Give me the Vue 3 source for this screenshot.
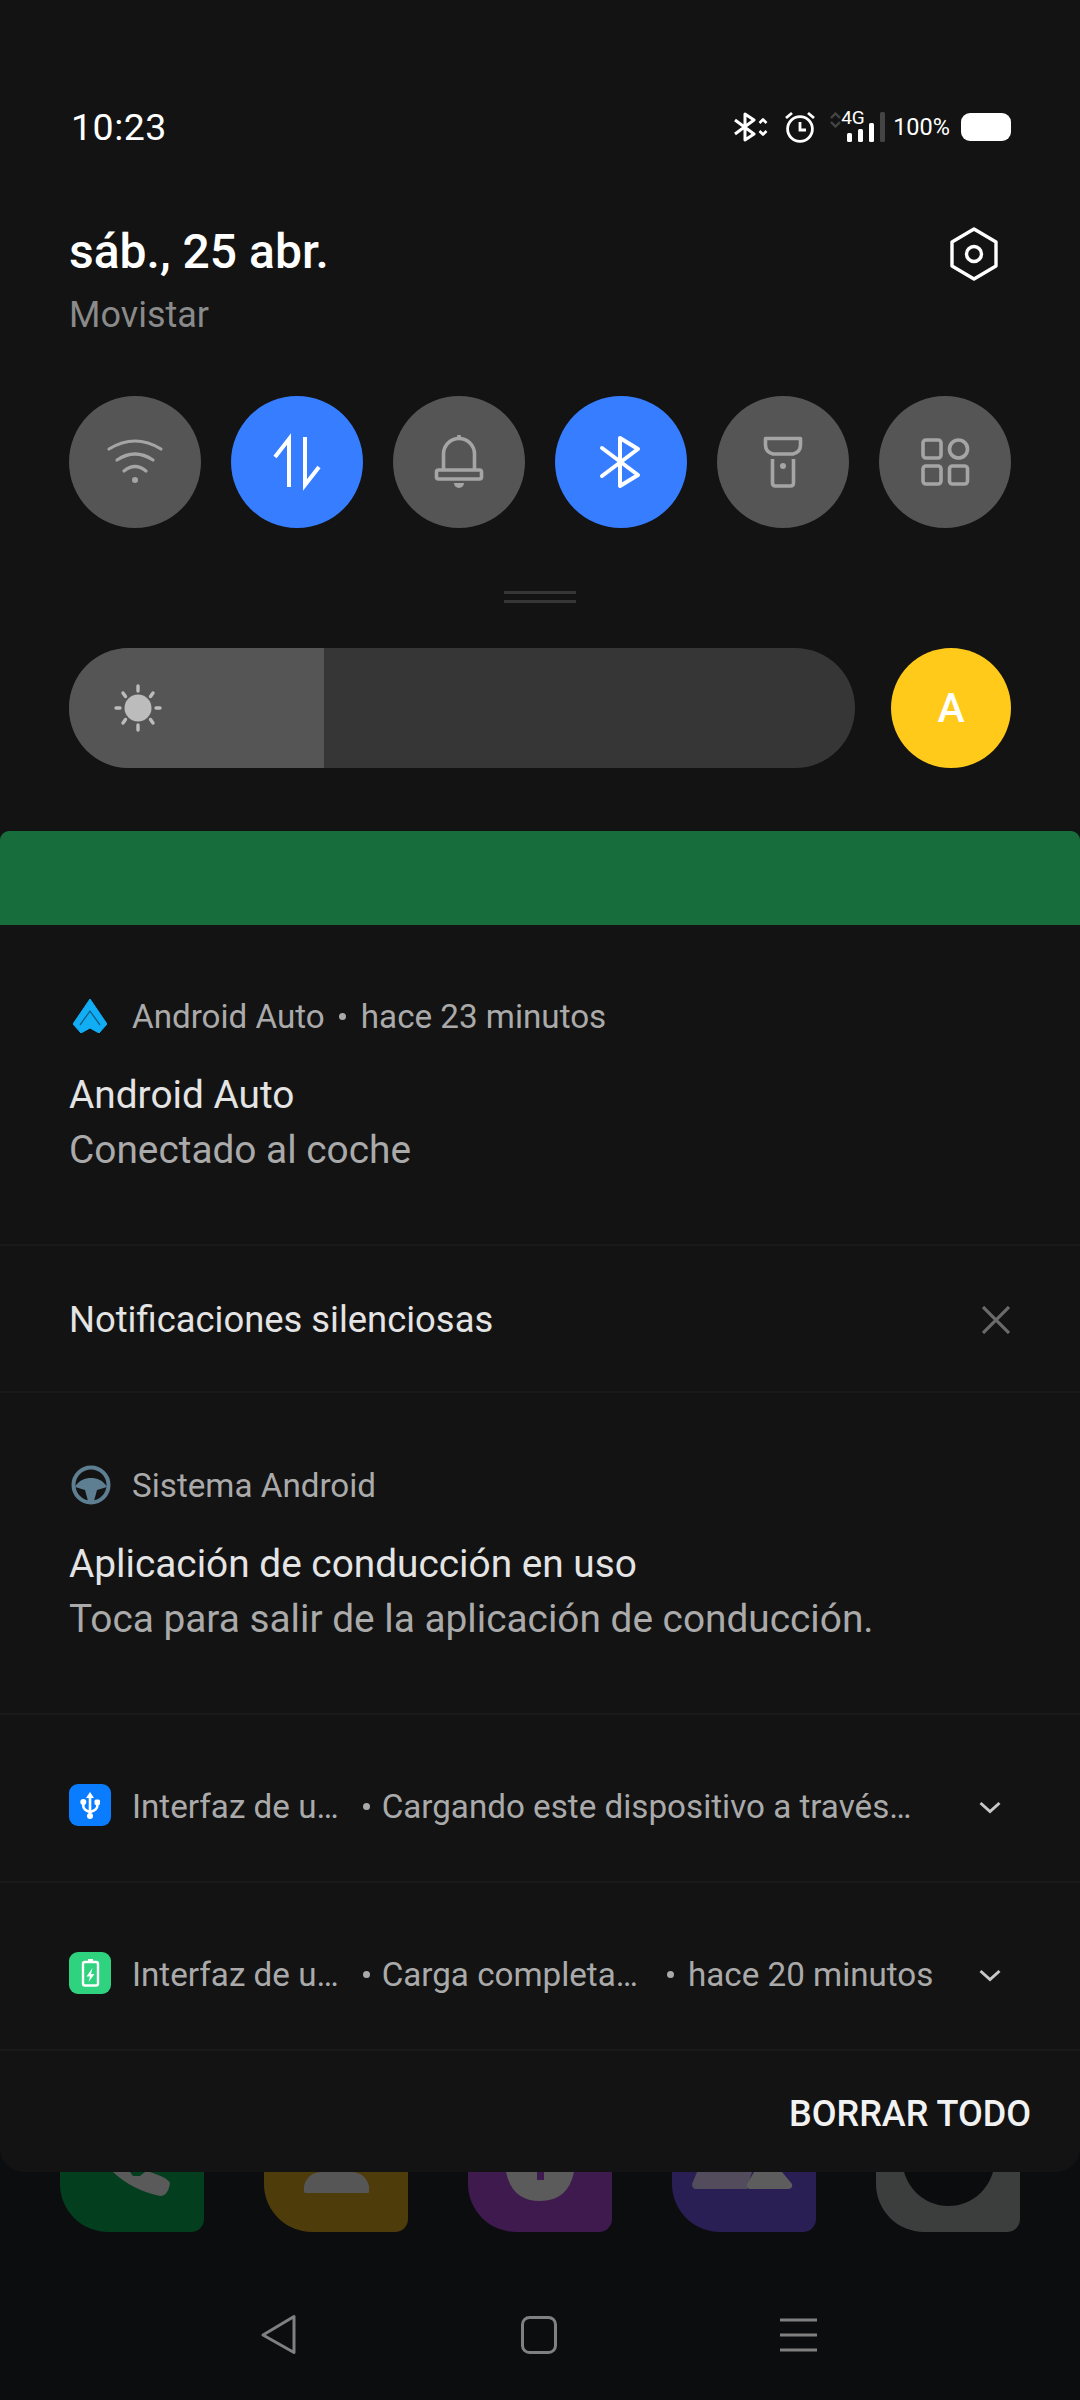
<script setup>
const silentRows = [
  { parts: ['Interfaz de u…', 'Cargando este dispositivo a través…'], kind: 'usb' },
  { parts: ['Interfaz de u…', 'Carga completa…', 'hace 20 minutos'], kind: 'bat' }
]
const docks = ['phone', 'contact', 'clock', 'store', 'cam']
</script>

<template>
  <div class="screen">
    <div class="panel">
      <div class="status">
        <span class="time">10:23</span>
        <div class="status-icons">
          <svg class="si-bt" width="34" height="30" viewBox="0 0 34 30" fill="none" stroke="#fff" stroke-width="3" stroke-linejoin="round">
            <path d="M1 8 L20 22 L11 28 V2 L20 8 L1 22" />
            <path d="M25.500 11 L29 7.500 L32.500 11 M25.500 19 L29 22.500 L32.500 19" stroke-width="2.600" />
          </svg>
          <svg class="si-alarm" width="30" height="32" viewBox="0 0 30 32" fill="none" stroke="#fff" stroke-width="2.800">
            <circle cx="15" cy="18" r="12.400" />
            <path d="M15 11 V19 H21" />
            <path d="M1 7 L7 2 M29 7 L23 2" />
          </svg>
          <div class="si-net">
            <svg class="si-updown" width="11" height="16" viewBox="0 0 11 16" fill="none" stroke="#444" stroke-width="2.400">
              <path d="M1 6 L5.500 1.500 L10 6 M1 10 L5.500 14.500 L10 10" />
            </svg>
            <span class="four-g">4G</span>
            <svg class="si-bars" width="40" height="31" viewBox="0 0 40 31">
              <rect x="1" y="21" width="5" height="9" rx="1.500" fill="#fff" />
              <rect x="12" y="17" width="5" height="13" rx="1.500" fill="#fff" />
              <rect x="23" y="11" width="5" height="19" rx="1.500" fill="#fff" />
              <rect x="34" y="0" width="5" height="30" rx="1.500" fill="#444" />
            </svg>
          </div>
          <span class="pct">100%</span>
          <div class="battery"></div>
        </div>
      </div>

      <div class="date-row">
        <div>
          <div class="date">sáb., 25 abr.</div>
          <div class="carrier">Movistar</div>
        </div>
        <svg width="50" height="54" viewBox="0 0 50 54" fill="none" stroke="#fff" stroke-width="3.400" stroke-linejoin="round">
          <path d="M25 2 L47 15 V39 L25 52 L3 39 V15 Z" />
          <circle cx="25" cy="27" r="7.500" />
        </svg>
      </div>

      <div class="toggles">
        <div class="toggle">
          <svg viewBox="0 0 132 132" fill="none" stroke="#a5a5a5" stroke-width="3.200" stroke-linecap="round">
            <path d="M40 53 Q66 37 92 53" />
            <path d="M48 64 Q66 52 84 64" />
            <path d="M55 75 Q66 66 77 75" />
            <circle cx="66" cy="84" r="3" fill="#a5a5a5" stroke="none" />
          </svg>
        </div>
        <div class="toggle on">
          <svg viewBox="0 0 132 132" fill="none" stroke="#fff" stroke-width="4">
            <path d="M44 61 L58 43 V91" />
            <path d="M74 41 V89 L88 71" />
          </svg>
        </div>
        <div class="toggle">
          <svg viewBox="0 0 132 132" fill="none" stroke="#a5a5a5" stroke-width="3.600" stroke-linejoin="round">
            <path d="M50.500 74 V58 a15.500 15.500 0 0 1 31 0 V74" />
            <rect x="43.500" y="74" width="45" height="9" rx="2" />
            <path d="M66 39 V43" />
            <path d="M61 87 H71 A5 5 0 0 1 61 87 Z" fill="#a5a5a5" stroke="none" />
          </svg>
        </div>
        <div class="toggle on">
          <svg viewBox="0 0 132 132" fill="none" stroke="#fff" stroke-width="4" stroke-linejoin="round" stroke-linecap="round">
            <path d="M47 52 L83 79 L65 90 V42 L83 53 L47 80" />
          </svg>
        </div>
        <div class="toggle">
          <svg viewBox="0 0 132 132" fill="none" stroke="#a5a5a5" stroke-width="3.600" stroke-linejoin="round">
            <path d="M48.500 42.500 H83.500 V49 Q83.500 56 76 58 H56 Q48.500 56 48.500 49 Z" />
            <path d="M55.500 63 V87 q0 3 3 3 H73.500 q3 0 3 -3 V63" />
            <circle cx="66" cy="70" r="3" fill="#a5a5a5" stroke="none" />
          </svg>
        </div>
        <div class="toggle">
          <svg viewBox="0 0 132 132" fill="none" stroke="#a5a5a5" stroke-width="3.600">
            <rect x="44" y="44" width="18" height="18" rx="3" />
            <circle cx="79.500" cy="53" r="9" />
            <rect x="44" y="70" width="18" height="18" rx="3" />
            <rect x="70.500" y="70" width="18" height="18" rx="3" />
          </svg>
        </div>
      </div>

      <div class="handle"><i></i><i></i></div>

      <div class="brightness">
        <div class="slider">
          <div class="slider-fill">
            <svg width="48" height="48" viewBox="0 0 48 48" fill="#bcbcbc" stroke="#bcbcbc" stroke-width="3.400" stroke-linecap="round">
              <circle cx="24" cy="24" r="13.500" stroke="none" />
              <path d="M24 2 V7 M24 41 V46 M2 24 H6 M42 24 H46 M9 9 L11.500 12.500 M39 9 L36.500 12.500 M9 39 L11.500 35.500 M39 39 L36.500 35.500" />
            </svg>
          </div>
        </div>
        <div class="auto">A</div>
      </div>

      <div class="green"></div>

      <section class="notif first">
        <div class="app-line">
          <svg class="app-icon" width="34" height="34" viewBox="0 0 34 34">
            <path d="M17 0 L34 25 L26 34 L17 29 L8 34 L0 25 Z" fill="#12aef5" stroke="#12aef5" stroke-linejoin="round" />
            <path d="M7 26 L17 12 L27 26" fill="none" stroke="#0d5f86" stroke-width="1.300" />
          </svg>
          <span>Android Auto</span><b class="dot"></b><span>hace 23 minutos</span>
        </div>
        <div class="title">Android Auto</div>
        <div class="body">Conectado al coche</div>
      </section>

      <div class="silent-head">
        <span>Notificaciones silenciosas</span>
        <svg width="28" height="28" viewBox="0 0 28 28" stroke="#6a6a6a" stroke-width="3.200">
          <path d="M1 1 L27 27 M27 1 L1 27" />
        </svg>
      </div>

      <section class="notif second">
        <div class="app-line">
          <svg class="app-icon wheel" width="40" height="40" viewBox="0 0 40 40">
            <circle cx="20" cy="20" r="17.500" fill="none" stroke="#5d7f91" stroke-width="4" />
            <path d="M4 22 C8 15 14 13 20 13 C26 13 32 15 36 22 L26 25 L23 36 H17 L14 25 Z" fill="#5d7f91" />
          </svg>
          <span>Sistema Android</span>
        </div>
        <div class="title">Aplicación de conducción en uso</div>
        <div class="body">Toca para salir de la aplicación de conducción.</div>
      </section>

      <div v-for="row in silentRows" :key="row.kind" class="collapsed">
        <div class="mini" :class="row.kind">
          <svg v-if="row.kind === 'usb'" width="42" height="42" viewBox="0 0 42 42" fill="none" stroke="#fff" stroke-width="2.600">
            <path d="M21 12 V31" />
            <path d="M14.300 19 V22 Q14.300 26 21 28 Q28.300 26 28.300 22 V19" />
            <path d="M21 8 L25 14 H17 Z" fill="#fff" stroke="none" />
            <circle cx="21" cy="32" r="3" fill="#fff" stroke="none" />
            <circle cx="14.300" cy="18" r="3" fill="#fff" stroke="none" />
            <rect x="25.500" y="15.500" width="5.500" height="5.500" rx="1.500" fill="#fff" stroke="none" />
          </svg>
          <svg v-else width="42" height="42" viewBox="0 0 42 42" fill="none" stroke="#fff" stroke-width="2.400">
            <rect x="14" y="10" width="15" height="23.500" rx="2" />
            <path d="M19 7 H24 V10 H19 Z" fill="#fff" stroke="none" />
            <path d="M23.500 16 L17.500 24.500 H21 L19.500 30 L25.500 22 H22 Z" fill="#fff" stroke="none" />
          </svg>
        </div>
        <div class="mini-text">
          <template v-for="(part, i) in row.parts" :key="i">
            <b v-if="i" class="dot"></b>
            <span>{{ part }}</span>
          </template>
        </div>
        <svg class="chev" width="22" height="14" viewBox="0 0 22 14" fill="none" stroke="#c8c8c8" stroke-width="3">
          <path d="M1.500 2 L11 10.500 L20.500 2" />
        </svg>
      </div>

      <div class="clear-row"><span>BORRAR TODO</span></div>
    </div>

    <div class="dock">
      <div v-for="d in docks" :key="d" class="dock-icon" :class="d">
        <svg width="144" height="60" viewBox="0 0 144 60">
          <path v-if="d === 'phone'" d="M53 0 Q72 18 100 24 Q108 24 110 11 Q108 6 90 0 H85 L80 4 H73 L70 0 Z" fill="#5a5a5a" />
          <path v-if="d === 'contact'" d="M40 20 V14 Q44 0 58 0 H87 Q101 0 105 14 V20 Q105 21 103 21 H42 Q40 21 40 20 Z" fill="#565656" />
          <path v-if="d === 'clock'" d="M38 0 H106 Q100 29 72 29 Q44 29 38 0 Z" fill="#5b5b5b" />
          <rect v-if="d === 'clock'" x="69" y="0" width="7" height="8" fill="#3f1a4f" />
          <path v-if="d === 'store'" d="M25 0 H80 L75 17 H24 Q20 17 20 12 Z" fill="#524c5c" />
          <path v-if="d === 'store'" d="M82 0 H110 L120 12 Q121 17 116 17 H78 Q74 17 75 12 Z" fill="#5d5d5d" />
          <circle v-if="d === 'cam'" cx="72.500" cy="-12" r="46" fill="#0b0c0e" />
        </svg>
      </div>
    </div>

    <div class="nav">
      <svg width="38" height="42" viewBox="0 0 38 42" fill="none" stroke="#808080" stroke-width="3" stroke-linejoin="round">
        <path d="M34 2.500 V38.500 L3 21 Z" />
      </svg>
      <svg width="36" height="38" viewBox="0 0 36 38" fill="none" stroke="#808080" stroke-width="3">
        <rect x="1.500" y="1.500" width="33" height="35" rx="7" />
      </svg>
      <svg width="37" height="34" viewBox="0 0 37 34" stroke="#808080" stroke-width="3">
        <path d="M0 2 H37 M0 17 H37 M0 32 H37" />
      </svg>
    </div>
  </div>
</template>

<style scoped>
.screen {
  width: 1080px;
  height: 2400px;
  background: #0c0d0f;
  font-family: Roboto, "Liberation Sans", sans-serif;
  overflow: hidden;
  display: flex;
  flex-direction: column;
}
.panel {
  height: 2172px;
  flex: none;
  background: #131313;
  border-radius: 0 0 24px 24px;
  position: relative;
  z-index: 1;
}
.status {
  padding: 100px 69px 0 71px;
  height: 54px;
  display: flex;
  align-items: center;
  justify-content: space-between;
}
.time {
  font-size: 37.500px;
  color: #fff;
  letter-spacing: 0.500px;
}
.status-icons {
  display: flex;
  align-items: center;
  height: 54px;
}
.si-bt { margin-right: 17px; }
.si-alarm { margin-right: 15px; }
.si-net {
  position: relative;
  width: 56px;
  height: 31px;
  margin-right: 7px;
}
.si-updown { position: absolute; left: 0; top: 0; }
.si-bars { position: absolute; right: 0; top: 0; }
.four-g {
  position: absolute;
  left: 11px;
  top: -4px;
  font-size: 19px;
  line-height: 20px;
  color: #fff;
}
.pct {
  font-size: 23.500px;
  color: #fff;
  margin-right: 11px;
}
.battery {
  width: 50px;
  height: 28px;
  border-radius: 9px;
  background: #fff;
}
.date-row {
  margin-top: 73px;
  padding: 0 81px 0 69px;
  display: flex;
  justify-content: space-between;
  align-items: flex-start;
}
.date {
  font-size: 48px;
  font-weight: 500;
  color: #fff;
  line-height: 50px;
}
.carrier {
  margin-top: 16px;
  font-size: 36px;
  line-height: 44px;
  color: #8a8a8a;
}
.toggles {
  margin-top: 59px;
  padding: 0 69px;
  display: flex;
  justify-content: space-between;
}
.toggle {
  width: 132px;
  height: 132px;
  border-radius: 50%;
  background: #555;
}
.toggle svg { display: block; width: 132px; height: 132px; }
.toggle.on { background: #367eff; }
.handle {
  margin-top: 63px;
  display: flex;
  flex-direction: column;
  align-items: center;
  gap: 6px;
}
.handle i {
  display: block;
  width: 72px;
  height: 3px;
  background: #363636;
}
.brightness {
  margin-top: 45px;
  padding: 0 69px;
  display: flex;
  gap: 36px;
}
.slider {
  width: 786px;
  height: 120px;
  border-radius: 60px;
  background: #363636;
  overflow: hidden;
}
.slider-fill {
  width: 255px;
  height: 120px;
  background: #555;
  display: flex;
  align-items: center;
  padding-left: 45px;
  box-sizing: border-box;
}
.auto {
  width: 120px;
  height: 120px;
  border-radius: 50%;
  background: #ffca1a;
  color: #fff;
  font-size: 41px;
  font-weight: 500;
  display: flex;
  align-items: center;
  justify-content: center;
}
.green {
  margin-top: 63px;
  height: 94px;
  background: #176d3b;
  border-radius: 9px 9px 0 0;
}
.notif {
  border-bottom: 2px solid #1a1a1a;
  box-sizing: border-box;
  padding-left: 69px;
}
.notif.first { height: 321px; padding-top: 70px; }
.notif.second { height: 322px; padding-top: 71px; }
.app-line {
  display: flex;
  align-items: center;
  height: 42px;
  font-size: 33.200px;
  color: #aaa;
}
.app-icon {
  margin-left: 4px;
  margin-right: 25px;
}
.app-icon.wheel {
  margin-left: 2px;
  margin-right: 21px;
}
.dot {
  width: 7px;
  height: 7px;
  border-radius: 50%;
  background: #aaa;
  margin: 0 15px 0 14px;
  flex: none;
}
.title {
  margin-top: 33px;
  font-size: 38.800px;
  line-height: 50px;
  color: #e4e4e4;
}
.body {
  margin-top: 5px;
  font-size: 38.800px;
  line-height: 50px;
  color: #aaa;
}
.silent-head {
  height: 147px;
  box-sizing: border-box;
  padding: 2px 70px 0 69px;
  border-bottom: 2px solid #1a1a1a;
  display: flex;
  align-items: center;
  justify-content: space-between;
  font-size: 36.400px;
  color: #e4e4e4;
}
.collapsed {
  height: 168px;
  box-sizing: border-box;
  border-bottom: 2px solid #1a1a1a;
  padding: 14px 69px 0;
  display: flex;
  align-items: center;
  position: relative;
}
.mini {
  width: 42px;
  height: 42px;
  border-radius: 9px;
  flex: none;
  margin-right: 21px;
}
.mini svg { display: block; }
.mini.usb { background: #0a7cff; }
.mini.bat { background: #2fd37f; }
.mini-text {
  display: flex;
  align-items: center;
  padding-top: 3px;
  font-size: 33.200px;
  color: #aaa;
  white-space: nowrap;
}
.mini-text .dot { margin: 0 12px 0 24px; }
.mini-text span + .dot + span + .dot { margin: 0 14px 0 29px; }
.chev {
  position: absolute;
  left: 979px;
  top: 86px;
}
.clear-row {
  display: flex;
  justify-content: flex-end;
  padding: 41px 49px 0 0;
  font-size: 36px;
  line-height: 44px;
  font-weight: 500;
  color: #f2f2f2;
}
.dock {
  height: 60px;
  padding: 0 60px;
  display: flex;
  justify-content: space-between;
  flex: none;
}
.dock-icon {
  width: 144px;
  height: 60px;
  border-radius: 0 0 13px 48px;
  overflow: hidden;
}
.dock-icon svg { display: block; }
.phone { background: #033f1f; }
.contact { background: #4e3c0a; }
.clock { background: #3f1a4f; }
.store { background: #2a1f55; }
.cam { background: #3c3d3d; }
.nav {
  margin-top: 82px;
  padding: 0 263px 0 260px;
  display: flex;
  justify-content: space-between;
  align-items: center;
}
</style>
